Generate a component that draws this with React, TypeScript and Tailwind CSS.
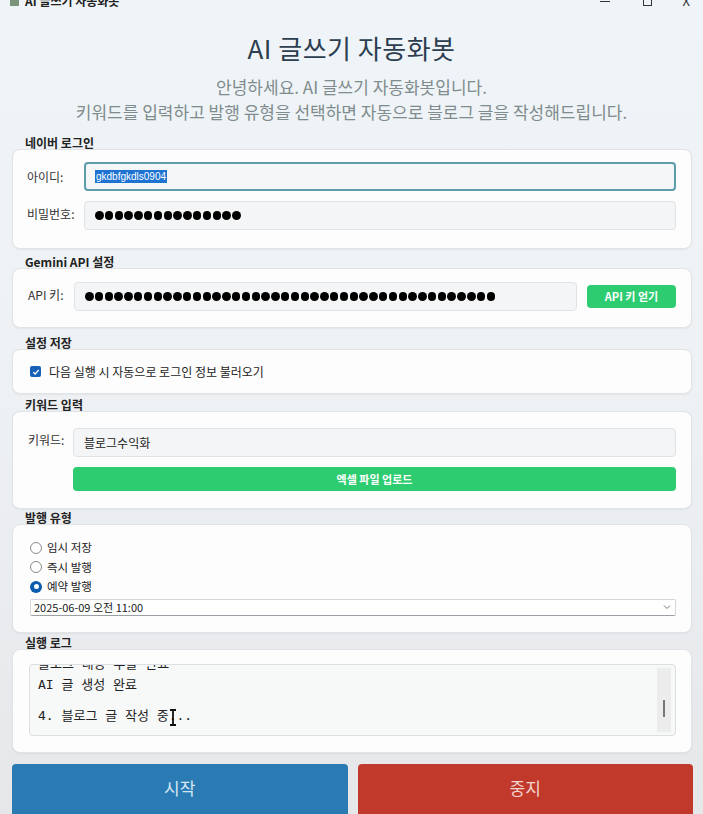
import React from "react";

const KR = { fontFamily: '"Noto Sans CJK KR", "Liberation Sans", sans-serif' };
const MONO = { fontFamily: '"DejaVu Sans Mono", "Noto Sans CJK KR", monospace' };

function Dots({ n }: { n: number }) {
  return (
    <div className="flex gap-[1.3px]">
      {Array.from({ length: n }).map((_, i) => (
        <div key={i} className="w-[8.5px] h-[8.5px] rounded-full bg-black" />
      ))}
    </div>
  );
}

function Group({
  title,
  children,
  className,
  top,
}: {
  title: string;
  children: React.ReactNode;
  className?: string;
  top: string;
}) {
  return (
    <div className={"flex flex-col " + top}>
      <div className="pl-[13px] h-[13px] text-[12px] leading-[13px] font-bold text-[#222] relative z-10" style={KR}>
        {title}
      </div>
      <div
        className={
          "bg-[#fdfdfd] border border-[#e1e4e7] rounded-[8px] shadow-[0_1px_2px_rgba(0,0,0,0.05)] " + (className || "")
        }
      >
        {children}
      </div>
    </div>
  );
}

function Radio({ checked, label }: { checked?: boolean; label: string }) {
  return (
    <div className="flex items-center h-[19.5px] gap-[5px]">
      {checked ? (
        <div className="w-[12px] h-[12px] rounded-full bg-[#0b5cad] flex items-center justify-center">
          <div className="w-[5px] h-[5px] rounded-full bg-white" />
        </div>
      ) : (
        <div className="w-[12px] h-[12px] rounded-full border border-[#8a8a8a] bg-white" />
      )}
      <span className="text-[11.5px] text-[#222]" style={KR}>
        {label}
      </span>
    </div>
  );
}

export default function App() {
  return (
    <div
      className="w-[703px] h-[814px] overflow-hidden bg-gradient-to-b from-[#eff4f8] via-[#eef1f4] to-[#e5e7e9] flex flex-col"
      style={KR}
    >
      {/* title bar (cut off at top) */}
      <div className="h-[24px] -mt-[11px] flex items-center px-[10px] shrink-0">
        <div className="w-[9px] h-[10px] bg-[#7b937b] mr-[6px]" />
        <span className="text-[12px] font-bold text-[#222]" style={KR}>
          AI 글쓰기 자동화봇
        </span>
        <div className="flex-1" />
        <div className="w-[10px] h-[1px] bg-[#333] mr-[33px]" />
        <div className="w-[9px] h-[9px] border border-[#333] mr-[31px]" />
        <span className="text-[13px] text-[#333] mr-[3px]">X</span>
      </div>

      {/* heading */}
      <div className="text-center text-[26px] leading-[30px] text-[#2c3e50] mt-[20px] tracking-[0.5px]">
        AI 글쓰기 자동화봇
      </div>
      <div className="text-center text-[17px] leading-[25px] text-[#7f8c8d] mt-[11px]">
        <div>안녕하세요. AI 글쓰기 자동화봇입니다.</div>
        <div>키워드를 입력하고 발행 유형을 선택하면 자동으로 블로그 글을 작성해드립니다.</div>
      </div>

      <div className="flex flex-col pl-[12px] pr-[11px]">
        {/* naver login */}
        <Group
          top="mt-[12px]"
          title="네이버 로그인"
          className="pt-[12px] pb-[18px] pl-[14px] pr-[15px] flex flex-col gap-[10px]"
        >
          <div className="flex items-start">
            <span className="w-[57px] pt-[6px] text-[12px] text-[#333]">아이디:</span>
            <div className="flex-1 h-[29px] rounded-[4px] border-2 border-[#5d9eac] bg-[#f4f6f7] flex items-center pl-[9px]">
              <span
                className="bg-[#1e73d2] text-white text-[10px] leading-[13px] px-[1px]"
                style={{ fontFamily: '"Liberation Sans", sans-serif' }}
              >
                gkdbfgkdls0904
              </span>
            </div>
          </div>
          <div className="flex items-start">
            <span className="w-[57px] pt-[4px] text-[12px] text-[#333]">비밀번호:</span>
            <div className="flex-1 h-[29px] rounded-[4px] border border-[#e0e3e5] bg-[#f4f5f6] flex items-center pl-[10px]">
              <Dots n={15} />
            </div>
          </div>
        </Group>

        {/* gemini */}
        <Group top="mt-[6px]" title="Gemini API 설정" className="pt-[13px] pb-[16px] pl-[15px] pr-[15px] flex items-start">
          <span className="w-[46px] pt-[4px] text-[12px] text-[#333]">API 키:</span>
          <div className="flex-1 h-[29px] rounded-[4px] border border-[#e0e3e5] bg-[#f4f5f6] flex items-center pl-[10px]">
            <Dots n={42} />
          </div>
          <div className="ml-[10px] mt-[3px] w-[89px] h-[23px] rounded-[4px] bg-[#2ecc71] flex items-center justify-center text-white text-[11px] font-bold">
            API 키 얻기
          </div>
        </Group>

        {/* settings */}
        <Group top="mt-[8px]" title="설정 저장" className="h-[45px] pl-[17px] flex items-center">
          <div className="w-[11px] h-[11px] rounded-[2px] bg-[#1660b8] flex items-center justify-center mr-[8px]">
            <svg width="8" height="8" viewBox="0 0 8 8">
              <path d="M1.3 4.2 L3.2 6 L6.7 2" stroke="white" strokeWidth="1.3" fill="none" />
            </svg>
          </div>
          <span className="text-[12px] text-[#222]">다음 실행 시 자동으로 로그인 정보 불러오기</span>
        </Group>

        {/* keyword */}
        <Group
          top="mt-[4px]"
          title="키워드 입력"
          className="pt-[16px] pb-[17px] pl-[15px] pr-[15px] flex flex-col gap-[10px]"
        >
          <div className="flex items-start">
            <span className="w-[45px] pt-[3px] text-[12px] text-[#333]">키워드:</span>
            <div className="flex-1 h-[29px] rounded-[4px] border border-[#e0e3e5] bg-[#f4f5f6] flex items-center pl-[10px] text-[12px] text-[#222]">
              블로그수익화
            </div>
          </div>
          <div className="ml-[45px] h-[24px] rounded-[4px] bg-[#2ecc71] flex items-center justify-center text-white text-[11px] font-bold">
            엑셀 파일 업로드
          </div>
        </Group>

        {/* publish type */}
        <Group top="mt-[2px]" title="발행 유형" className="pt-[13px] pb-[16px] pl-[17px] pr-[15px] flex flex-col">
          <Radio label="임시 저장" />
          <Radio label="즉시 발행" />
          <Radio checked label="예약 발행" />
          <div className="mt-[2px] h-[17px] bg-white border border-[#d5d8db] border-b-[#9aa0a6] rounded-[2px] flex items-center pl-[3px] pr-[4px] text-[11px] text-[#222]">
            <span className="flex-1">2025-06-09 오전 11:00</span>
            <svg width="8" height="6" viewBox="0 0 8 6">
              <path d="M1 1.5 L4 4.5 L7 1.5" stroke="#777" strokeWidth="1" fill="none" />
            </svg>
          </div>
        </Group>

        {/* log */}
        <Group top="mt-[3px]" title="실행 로그" className="pt-[14px] pb-[16px] pl-[16px] pr-[15px]">
          <div className="relative h-[72px] rounded-[4px] border border-[#dcdfe2] bg-[#f7f8f8] flex overflow-hidden">
            <div className="flex-1 overflow-hidden pl-[8px] text-[13px] leading-[15.5px] text-[#222]" style={MONO}>
              <div className="-mt-[9px]">블로그 내용 추출 완료</div>
              <div className="mt-[6px]">AI 글 생성 완료</div>
              <div>&nbsp;</div>
              <div>4. 블로그 글 작성 중...</div>
            </div>
            <div className="w-[14px] my-[3px] mr-[4px] bg-[#ececec] flex justify-center">
              <div className="w-[1.5px] h-[17px] bg-[#777] mt-[32px]" />
            </div>
            <svg className="absolute left-[139px] top-[44px]" width="8" height="17" viewBox="0 0 8 17">
              <path d="M1 1 H7 M4 1 V16 M1 16 H7" stroke="#111" strokeWidth="1.8" fill="none" />
            </svg>
          </div>
        </Group>
      </div>

      {/* action buttons */}
      <div className="flex gap-[10px] pl-[12px] pr-[10px] mt-[11px] flex-1">
        <div className="flex-1 rounded-t-[4px] bg-[#2a7bb4] flex items-center justify-center text-[17px] text-[#d3e6f3] pb-[2px]">
          시작
        </div>
        <div className="flex-1 rounded-t-[4px] bg-[#c0392b] flex items-center justify-center text-[17px] text-[#f2d4cf] pb-[2px]">
          중지
        </div>
      </div>
    </div>
  );
}
